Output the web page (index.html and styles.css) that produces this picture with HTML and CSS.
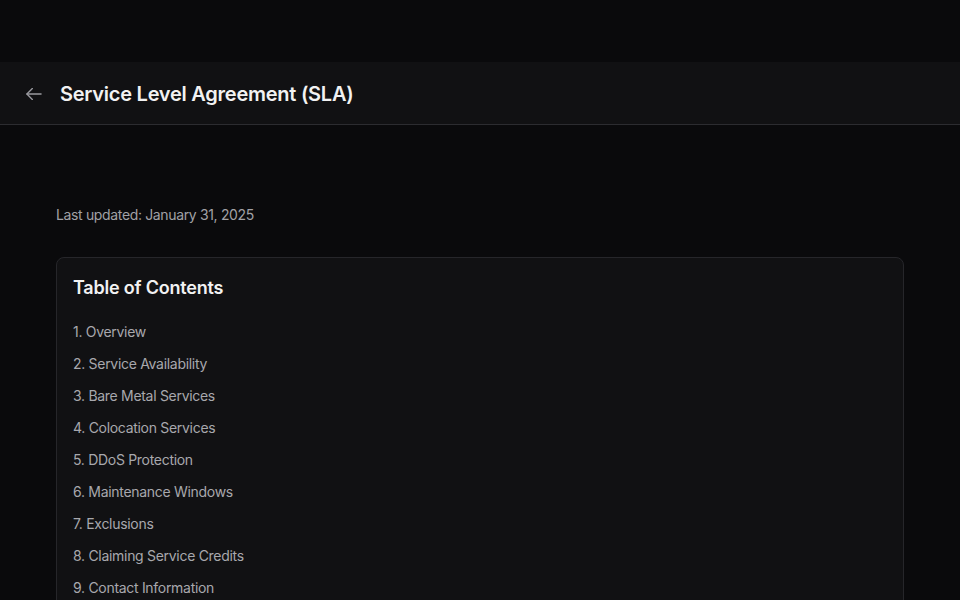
FILE: index.html
```html
<!DOCTYPE html>
<html lang="en">
<head>
<meta charset="utf-8">
<title>Service Level Agreement (SLA)</title>
<link rel="stylesheet" href="styles.css">
</head>
<body>
<div class="top-space"></div>
<header class="page-header">
  <a class="back" href="#" aria-label="Back">
    <svg width="20" height="20" viewBox="0 0 24 24" fill="none" stroke="currentColor" stroke-width="1.6" stroke-linecap="round" stroke-linejoin="round"><path d="M10 18.5 3.5 12 10 5.5"/><path d="M3.5 12H20.5"/></svg>
  </a>
  <h1 class="title">Service Level Agreement (SLA)</h1>
</header>
<main class="content">
  <p class="updated">Last updated: January 31, 2025</p>
  <section class="toc">
    <h2 class="toc-title">Table of Contents</h2>
    <ul class="toc-list">
      <li><a href="#">1. Overview</a></li>
      <li><a href="#">2. Service Availability</a></li>
      <li><a href="#">3. Bare Metal Services</a></li>
      <li><a href="#">4. Colocation Services</a></li>
      <li><a href="#">5. DDoS Protection</a></li>
      <li><a href="#">6. Maintenance Windows</a></li>
      <li><a href="#">7. Exclusions</a></li>
      <li><a href="#">8. Claiming Service Credits</a></li>
      <li><a href="#">9. Contact Information</a></li>
    </ul>
  </section>
</main>
</body>
</html>
```

FILE: styles.css
```css
* { box-sizing: border-box; }
html, body { margin: 0; padding: 0; }
body {
  background: #0a0a0c;
  color: #ededed;
  font-family: Inter, "Noto Sans", sans-serif;
}
.top-space { height: 62px; background: #0a0a0c; }
.page-header {
  height: 63px;
  background: #111113;
  border-bottom: 1px solid #2c2c30;
  display: flex;
  align-items: center;
  padding: 2px 24px 0;
  gap: 16px;
}
.back {
  color: #9a9aa0;
  display: flex;
  align-items: center;
  text-decoration: none;
}
.title {
  margin: 0;
  font-size: 20px;
  font-weight: 600;
  color: #f2f2f2;
  letter-spacing: -0.25px;
}
.content {
  padding: 80px 56px 0;
}
.updated {
  margin: 0 0 32px;
  font-size: 14px;
  line-height: 20px;
  color: #a1a1a6;
  letter-spacing: -0.35px;
}
.toc {
  background: #111113;
  border: 1px solid #26262a;
  border-radius: 8px;
  padding: 16px 16px 24px;
}
.toc-title {
  margin: 0 0 20px;
  font-size: 18px;
  line-height: 28px;
  font-weight: 600;
  color: #f2f2f2;
  letter-spacing: -0.2px;
}
.toc-list {
  list-style: none;
  margin: 0;
  padding: 0;
  display: flex;
  flex-direction: column;
  gap: 12px;
}
.toc-list li { line-height: 20px; font-size: 14px; letter-spacing: -0.3px; }
.toc-list a { color: #a8a8ad; text-decoration: none; }
```
